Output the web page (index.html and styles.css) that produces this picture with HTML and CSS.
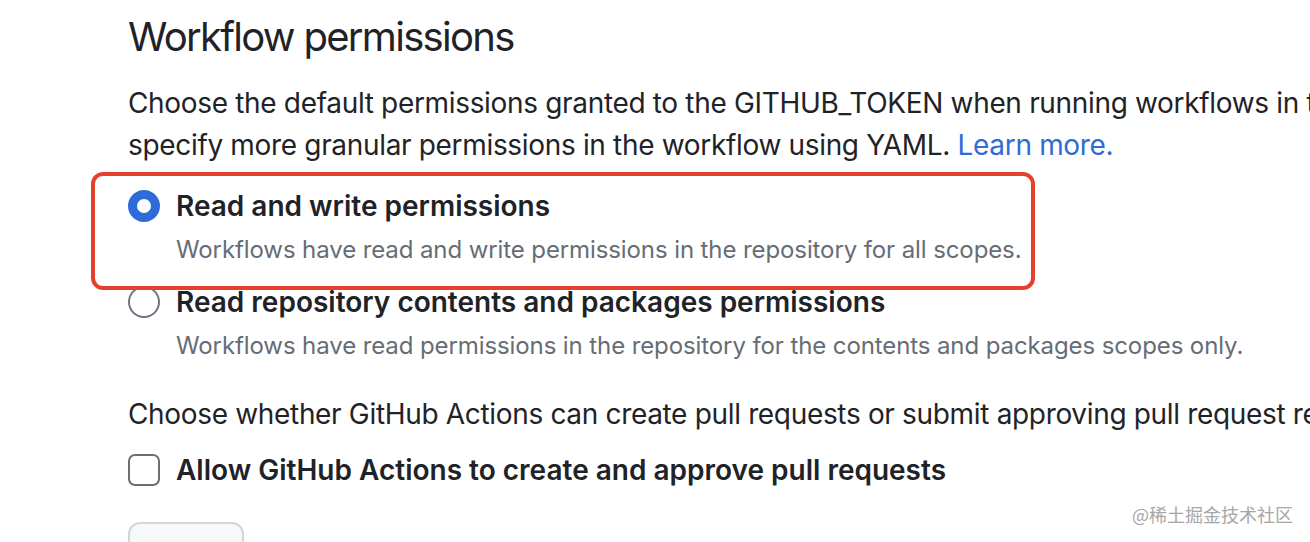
FILE: index.html
```html
<!DOCTYPE html>
<html lang="en">
<head>
    <meta charset="UTF-8">
    <meta name="viewport" content="width=device-width, initial-scale=1.0">
    <title>Workflow permissions</title>
    <link rel="stylesheet" href="styles.css">
</head>
<body>
    <div class="page">
        <h2 class="heading">Workflow permissions</h2>

        <p class="note">
            Choose the default permissions granted to the GITHUB_TOKEN when running workflows in this repository. You can<br>
            specify more granular permissions in the workflow using YAML. <a href="#">Learn more.</a>
        </p>

        <div class="option">
            <span class="radio checked"></span>
            <div class="option-body">
                <div class="option-title">Read and write permissions</div>
                <div class="option-desc">Workflows have read and write permissions in the repository for all scopes.</div>
            </div>
        </div>

        <div class="option">
            <span class="radio"></span>
            <div class="option-body">
                <div class="option-title">Read repository contents and packages permissions</div>
                <div class="option-desc">Workflows have read permissions in the repository for the contents and packages scopes only.</div>
            </div>
        </div>

        <p class="note note-second">Choose whether GitHub Actions can create pull requests or submit approving pull request reviews.</p>

        <div class="option option-check">
            <span class="checkbox"></span>
            <div class="option-body">
                <div class="option-title">Allow GitHub Actions to create and approve pull requests</div>
            </div>
        </div>

        <button class="save-btn" type="button">Save</button>

        <div class="highlight"></div>
    </div>

    <div class="watermark">@稀土掘金技术社区</div>
</body>
</html>
```

FILE: styles.css
```css
* {
    margin: 0;
    padding: 0;
    box-sizing: border-box;
}

body {
    background-color: #ffffff;
    color: #1f2328;
    font-family: Inter, 'Noto Sans', sans-serif;
    overflow: hidden;
    height: 542px;
}

.page {
    position: relative;
    padding: 12px 0 0 128px;
    width: 1600px;
}

.heading {
    font-size: 40px;
    font-weight: 400;
    line-height: 50px;
    letter-spacing: -1.7px;
}

.note {
    margin-top: 20px;
    font-size: 28px;
    line-height: 42px;
    letter-spacing: -0.33px;
    white-space: nowrap;
}

.note a {
    color: #2f6bd6;
    text-decoration: none;
}

.note-second {
    margin-top: 29px;
}

.option {
    display: flex;
    gap: 16px;
    margin-top: 20px;
}

.option + .option {
    margin-top: 14px;
}

.option-check {
    margin-top: 15px;
}

.option-title {
    font-size: 28px;
    font-weight: 600;
    line-height: 40px;
    white-space: nowrap;
}

.option-desc {
    margin-top: 6px;
    font-size: 24px;
    line-height: 36px;
    letter-spacing: -0.1px;
    color: #656d76;
    white-space: nowrap;
}

.radio {
    flex: none;
    width: 32px;
    height: 32px;
    margin-top: 4px;
    border: 2px solid #6e7781;
    border-radius: 50%;
}

.radio.checked {
    border: 9px solid #2f6bd8;
}

.checkbox {
    flex: none;
    width: 32px;
    height: 32px;
    margin-top: 4px;
    border: 2px solid #6e6e6e;
    border-radius: 7px;
}

.save-btn {
    margin-top: 32px;
    width: 116px;
    height: 64px;
    background-color: #f6f8fa;
    border: 2px solid #d0d7de;
    border-radius: 12px;
    font-family: inherit;
    font-size: 28px;
    color: #1f2328;
}

.highlight {
    position: absolute;
    left: 91px;
    top: 172px;
    width: 944px;
    height: 118px;
    border: 4px solid #e5402b;
    border-radius: 12px;
}

.watermark {
    position: absolute;
    right: 17px;
    top: 502px;
    font-family: 'Noto Sans CJK SC', sans-serif;
    font-size: 18px;
    line-height: 24px;
    color: #a6a6a6;
    text-shadow: 0 0 2px #ffffff;
}
```
